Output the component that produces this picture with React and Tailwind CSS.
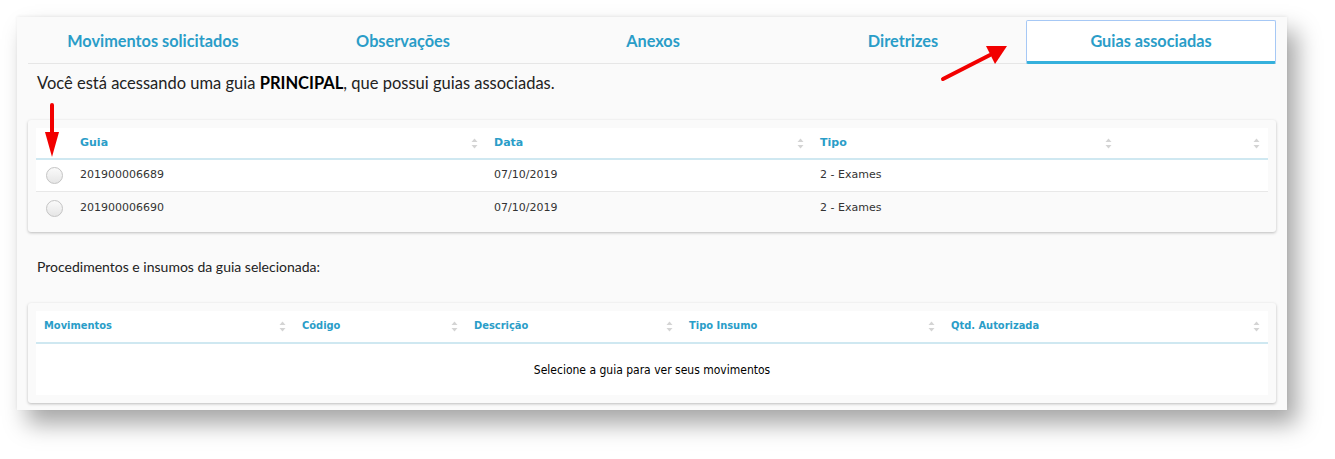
const tabs = ["Movimentos solicitados", "Observações", "Anexos", "Diretrizes", "Guias associadas"];

const guias = [
  { guia: "201900006689", data: "07/10/2019", tipo: "2 - Exames" },
  { guia: "201900006690", data: "07/10/2019", tipo: "2 - Exames" },
];

const movCols = [
  { label: "Movimentos", w: "w-[258px]" },
  { label: "Código", w: "w-[172px]" },
  { label: "Descrição", w: "w-[215px]" },
  { label: "Tipo Insumo", w: "w-[262px]" },
  { label: "Qtd. Autorizada", w: "flex-1" },
];

function SortIcon() {
  return (
    <svg width="7" height="11" viewBox="0 0 7 11" className="shrink-0">
      <path d="M3.5 0.5 L6.5 4 L0.5 4 Z" fill="#d4d4d4" />
      <path d="M3.5 10.5 L6.5 7 L0.5 7 Z" fill="#d4d4d4" />
    </svg>
  );
}

function HeadCell({ label, className = "" }) {
  return (
    <div className={`flex items-center justify-between px-2 ${className}`}>
      <span>{label}</span>
      <SortIcon />
    </div>
  );
}

function Radio() {
  return (
    <span className="block w-[17px] h-[17px] rounded-full border border-[#c4c4c4] bg-gradient-to-b from-[#fafafa] to-[#e6e6e6]" />
  );
}

export default function App() {
  return (
    <div className="relative w-[1335px] h-[459px] bg-white pl-[17px] pt-[17px] overflow-hidden">
      <div className="w-[1270px] h-[393px] bg-[#fafafa] px-[11px] pt-[3px] shadow-[10px_14px_22px_rgba(0,0,0,0.35),0_-1px_3px_rgba(0,0,0,0.06)]">
        {/* Tabs */}
        <div className="flex h-[44px] border-b border-[#e6e6e6] font-['Lato',sans-serif] text-[16.3px] font-bold text-[#2a9dc8]">
          {tabs.map((t, i) =>
            i === tabs.length - 1 ? (
              <div
                key={t}
                className="w-[250px] -ml-[2px] -mb-px flex items-center justify-center bg-white border border-[#a6c8f5] border-b-[3px] border-b-[#35b0dc] rounded-[2px]"
              >
                {t}
              </div>
            ) : (
              <div key={t} className="w-[250px] flex items-center justify-center">
                {t}
              </div>
            )
          )}
        </div>

        <p className="mt-[7px] ml-[9px] font-['Lato',sans-serif] text-[16.5px] leading-[24px] text-[#222]">
          Você está acessando uma guia <b className="font-bold text-black">PRINCIPAL</b>, que possui guias associadas.
        </p>

        {/* Guias table */}
        <div className="mt-[25px] bg-[#fafafa] rounded-[3px] p-2 shadow-[0_1px_3px_rgba(0,0,0,0.25)] font-['DejaVu_Sans',sans-serif] text-[11px]">
          <div className="flex h-[32px] bg-white border-b-2 border-[#cfe8f1] font-bold text-[#2a9dc8]">
            <div className="w-[36px]" />
            <HeadCell label="Guia" className="w-[414px]" />
            <HeadCell label="Data" className="w-[326px]" />
            <HeadCell label="Tipo" className="w-[308px]" />
            <HeadCell label="" className="flex-1" />
          </div>
          {guias.map((g, i) => (
            <div
              key={g.guia}
              className={`flex h-[32px] items-center text-[#333] ${i === 0 ? "bg-white border-b border-[#e8e8e8]" : "bg-[#fafafa]"}`}
            >
              <div className="w-[36px] flex justify-center pl-[1px]">
                <Radio />
              </div>
              <div className="w-[414px] px-2">{g.guia}</div>
              <div className="w-[326px] px-2">{g.data}</div>
              <div className="w-[308px] px-2">{g.tipo}</div>
              <div className="flex-1" />
            </div>
          ))}
        </div>

        <p className="mt-[24px] ml-[9px] font-['Lato',sans-serif] text-[14px] text-[#222]">
          Procedimentos e insumos da guia selecionada:
        </p>

        {/* Movimentos table */}
        <div className="mt-[26px] bg-[#fafafa] rounded-[3px] p-2 shadow-[0_1px_3px_rgba(0,0,0,0.25)] font-['DejaVu_Sans_Condensed','DejaVu_Sans',sans-serif] text-[11px]">
          <div className="flex h-[33px] bg-white border-b-2 border-[#cfe8f1] font-bold text-[#2a9dc8]">
            {movCols.map((c) => (
              <HeadCell key={c.label} label={c.label} className={c.w} />
            ))}
          </div>
          <div className="h-[51px] bg-white flex items-center justify-center text-[12px] text-black">
            Selecione a guia para ver seus movimentos
          </div>
        </div>
      </div>

      {/* Red arrows */}
      <svg className="absolute left-0 top-0 pointer-events-none" width="1335" height="459">
        <line x1="943" y1="79" x2="990" y2="55" stroke="#f20000" strokeWidth="4" strokeLinecap="round" />
        <path d="M1007 46 L986 46 L995 64 Z" fill="#f20000" />
        <line x1="52" y1="105" x2="52" y2="136" stroke="#f20000" strokeWidth="4" strokeLinecap="round" />
        <path d="M45 132 L59 132 L52 157 Z" fill="#f20000" />
      </svg>
    </div>
  );
}
